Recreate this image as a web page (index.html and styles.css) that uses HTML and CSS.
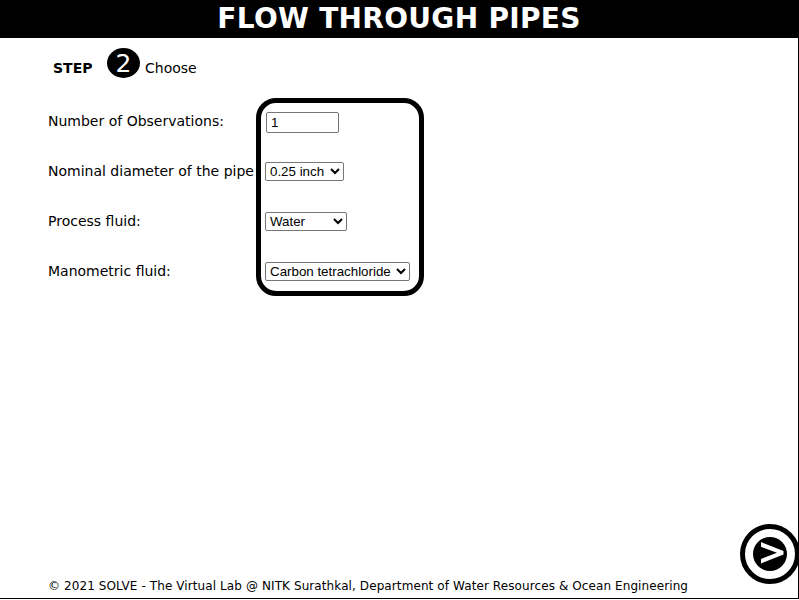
FILE: index.html
```html
<!DOCTYPE html>
<html lang="en">
<head>
<meta charset="utf-8">
<title>Flow Through Pipes</title>
<link rel="stylesheet" href="styles.css">
</head>
<body>
<div class="page">
  <header class="title"><h1>FLOW THROUGH PIPES</h1></header>
  <main class="content">
    <div class="step">
      <strong class="step-label">STEP</strong>
      <span class="step-number">2</span>
      <span class="step-text">Choose</span>
    </div>
    <form class="form">
      <div class="labels">
        <label for="obs">Number of Observations:</label>
        <label for="dia">Nominal diameter of the pipe</label>
        <label for="proc">Process fluid:</label>
        <label for="mano">Manometric fluid:</label>
      </div>
      <div class="controls">
        <div class="control"><input id="obs" type="text" value="1"></div>
        <div class="control"><select id="dia" class="dia"><option>0.25 inch</option></select></div>
        <div class="control"><select id="proc" class="proc"><option>Water</option></select></div>
        <div class="control"><select id="mano" class="mano"><option>Carbon tetrachloride</option></select></div>
      </div>
    </form>
  </main>
  <footer class="footer"><span>© 2021 SOLVE - The Virtual Lab @ NITK Surathkal, Department of Water Resources &amp; Ocean Engineering</span></footer>
  <button class="next" type="button" aria-label="Next">
    <svg width="34" height="34" viewBox="0 0 34 34"><circle cx="17" cy="17" r="17" fill="#000"/><path d="M8 5 30.5 14V17.5L8 26.5V22L24 15.8 8 9.8Z" fill="#fff"/></svg>
  </button>
</div>
</body>
</html>
```
FILE: styles.css
```css
* { box-sizing: border-box; }
body {
  margin: 0;
  background: #fff;
  color: #000;
  font: 14px/20px Verdana, "DejaVu Sans", sans-serif;
}
.page {
  position: relative;
  display: flex;
  flex-direction: column;
  width: 799px;
  height: 599px;
  border-right: 1px solid #000;
  border-bottom: 1px solid #000;
  overflow: hidden;
}
.title {
  height: 38px;
  background: #000;
  color: #fff;
  text-align: center;
}
.title h1 {
  margin: 0;
  font-size: 28px;
  line-height: 37px;
  letter-spacing: 0.3px;
}
.content { flex: 1; }
.step {
  display: flex;
  align-items: center;
  height: 60px;
  padding-left: 53px;
}
.step-label { width: 54px; }
.step-number {
  width: 33px;
  height: 30px;
  margin: -10px 5px 0 0;
  border-radius: 50%;
  background: #000;
  color: #fff;
  font-size: 25px;
  line-height: 32px;
  text-align: center;
}
.form { display: flex; padding-left: 48px; }
.labels { width: 208px; padding-top: 13px; }
.labels label {
  display: block;
  height: 50px;
  white-space: nowrap;
}
.controls {
  width: 168px;
  height: 198px;
  padding: 9px 0 0 4px;
  border: 5px solid #000;
  border-radius: 20px;
}
.control { display: flex; align-items: flex-start; height: 50px; }
input, select {
  margin: 0;
  border: 1px solid #767676;
  border-radius: 2px;
  background: #fff;
  color: #000;
  font: 13.333px "Liberation Sans", Arial, sans-serif;
}
input { width: 73px; height: 21px; margin-left: 1px; padding: 1px 4px; }
select { height: 19px; }
.dia { width: 79px; }
.proc { width: 82px; }
.mano { width: 145px; }
.footer {
  height: 24px;
  padding-left: 48px;
  font-size: 12px;
  line-height: 24px;
  letter-spacing: 0.095px;
  white-space: nowrap;
}
.next {
  position: absolute;
  left: 740px;
  top: 524px;
  display: flex;
  align-items: center;
  justify-content: center;
  width: 60px;
  height: 60px;
  padding: 0;
  border: 5px solid #000;
  border-radius: 50%;
  background: #fff;
}
```
